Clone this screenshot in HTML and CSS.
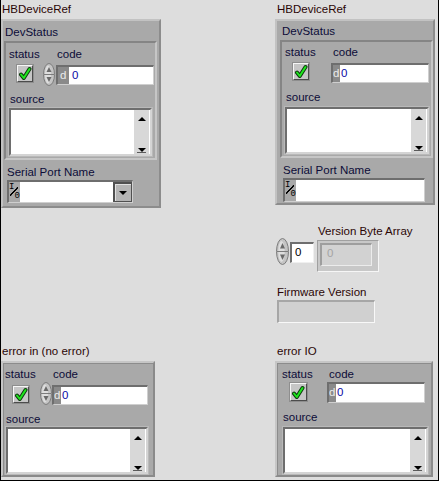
FILE: index.html
```html
<!DOCTYPE html>
<html>
<head>
<meta charset="utf-8">
<title>HBDevice Panel</title>
<link rel="stylesheet" href="styles.css">
</head>
<body>
<div class="panel">

  <!-- top-left HBDeviceRef -->
  <div class="obj hb-l">
    <div class="lbl top">HBDeviceRef</div>
    <div class="outer">
      <div class="lbl in dev">DevStatus</div>
      <div class="inner">
        <div class="row">
          <div class="scol">
            <div class="lbl in">status</div>
            <div class="chk"><svg width="14" height="15" viewBox="0 0 14 15"><path d="M3 8.5 L5.8 12 L11.5 3" fill="none" stroke="#0d3a0d" stroke-width="4" stroke-linecap="round" stroke-linejoin="round"/><path d="M3 8.5 L5.8 12 L11.5 3" fill="none" stroke="#1ee61e" stroke-width="2" stroke-linecap="round" stroke-linejoin="round"/></svg></div>
          </div>
          <div class="spin"><svg width="12" height="23" viewBox="0 0 12 23"><ellipse cx="6" cy="11.5" rx="5.5" ry="11" fill="#c4c4c4" stroke="#7c7c7c"/><ellipse cx="5" cy="11.5" rx="3" ry="9" fill="#dedede"/><line x1="1" y1="11.5" x2="11" y2="11.5" stroke="#7c7c7c"/><path d="M6 4 L8.5 9 L3.5 9Z" fill="#6a6a6a"/><path d="M6 19 L8.5 14 L3.5 14Z" fill="#6a6a6a"/></svg></div>
          <div class="ccol">
            <div class="lbl in cl">code</div>
            <div class="num"><span class="radix">d</span><span class="val">0</span></div>
          </div>
        </div>
        <div class="lbl in src">source</div>
        <div class="ta"><div class="sb"><span class="up"></span><span class="dn"></span></div></div>
      </div>
      <div class="lbl in spn">Serial Port Name</div>
      <div class="visa"><span class="io"><span class="io-i">I</span><span class="io-o">0</span></span><span class="field"></span><span class="ddb"><span class="tri"></span></span></div>
    </div>
  </div>

  <!-- top-right HBDeviceRef -->
  <div class="obj hb-r">
    <div class="lbl top">HBDeviceRef</div>
    <div class="outer">
      <div class="lbl in dev">DevStatus</div>
      <div class="inner">
        <div class="row">
          <div class="scol">
            <div class="lbl in">status</div>
            <div class="chk"><svg width="14" height="15" viewBox="0 0 14 15"><path d="M3 8.5 L5.8 12 L11.5 3" fill="none" stroke="#0d3a0d" stroke-width="4" stroke-linecap="round" stroke-linejoin="round"/><path d="M3 8.5 L5.8 12 L11.5 3" fill="none" stroke="#1ee61e" stroke-width="2" stroke-linecap="round" stroke-linejoin="round"/></svg></div>
          </div>
          <div class="ccol">
            <div class="lbl in cl">code</div>
            <div class="num"><span class="radix n">d</span><span class="val">0</span></div>
          </div>
        </div>
        <div class="lbl in src">source</div>
        <div class="ta"><div class="sb"><span class="up"></span><span class="dn"></span></div></div>
      </div>
      <div class="lbl in spn">Serial Port Name</div>
      <div class="visa"><span class="io"><span class="io-i">I</span><span class="io-o">0</span></span><span class="field"></span></div>
    </div>
  </div>

  <!-- version index + numeric -->
  <div class="obj vidx">
    <div class="spin big"><svg width="13" height="27" viewBox="0 0 13 27"><ellipse cx="6.5" cy="13.5" rx="6" ry="13" fill="#c4c4c4" stroke="#7c7c7c"/><ellipse cx="5.5" cy="13.5" rx="3.2" ry="10.5" fill="#dedede"/><line x1="1" y1="13.5" x2="12" y2="13.5" stroke="#7c7c7c"/><path d="M6.5 5 L9 10.5 L4 10.5Z" fill="#6a6a6a"/><path d="M6.5 22 L9 16.5 L4 16.5Z" fill="#6a6a6a"/></svg></div>
    <div class="num small"><span class="val blk">0</span></div>
  </div>

  <div class="obj varr">
    <div class="lbl top">Version Byte Array</div>
    <div class="arr"><div class="arr-el">0</div></div>
  </div>

  <div class="obj fw">
    <div class="lbl top">Firmware Version</div>
    <div class="str"></div>
  </div>

  <!-- error in -->
  <div class="obj ein">
    <div class="lbl top">error in (no error)</div>
    <div class="inner solo">
      <div class="row">
        <div class="scol">
          <div class="lbl in">status</div>
          <div class="chk"><svg width="14" height="15" viewBox="0 0 14 15"><path d="M3 8.5 L5.8 12 L11.5 3" fill="none" stroke="#0d3a0d" stroke-width="4" stroke-linecap="round" stroke-linejoin="round"/><path d="M3 8.5 L5.8 12 L11.5 3" fill="none" stroke="#1ee61e" stroke-width="2" stroke-linecap="round" stroke-linejoin="round"/></svg></div>
        </div>
        <div class="spin"><svg width="12" height="23" viewBox="0 0 12 23"><ellipse cx="6" cy="11.5" rx="5.5" ry="11" fill="#c4c4c4" stroke="#7c7c7c"/><ellipse cx="5" cy="11.5" rx="3" ry="9" fill="#dedede"/><line x1="1" y1="11.5" x2="11" y2="11.5" stroke="#7c7c7c"/><path d="M6 4 L8.5 9 L3.5 9Z" fill="#6a6a6a"/><path d="M6 19 L8.5 14 L3.5 14Z" fill="#6a6a6a"/></svg></div>
        <div class="ccol">
          <div class="lbl in cl">code</div>
          <div class="num"><span class="radix n">d</span><span class="val">0</span></div>
        </div>
      </div>
      <div class="lbl in src">source</div>
      <div class="ta"><div class="sb"><span class="up"></span><span class="dn"></span></div></div>
    </div>
  </div>

  <!-- error IO -->
  <div class="obj eio">
    <div class="lbl top">error IO</div>
    <div class="inner solo">
      <div class="row">
        <div class="scol">
          <div class="lbl in">status</div>
          <div class="chk"><svg width="14" height="15" viewBox="0 0 14 15"><path d="M3 8.5 L5.8 12 L11.5 3" fill="none" stroke="#0d3a0d" stroke-width="4" stroke-linecap="round" stroke-linejoin="round"/><path d="M3 8.5 L5.8 12 L11.5 3" fill="none" stroke="#1ee61e" stroke-width="2" stroke-linecap="round" stroke-linejoin="round"/></svg></div>
        </div>
        <div class="ccol">
          <div class="lbl in cl">code</div>
          <div class="num"><span class="radix n">d</span><span class="val">0</span></div>
        </div>
      </div>
      <div class="lbl in src">source</div>
      <div class="ta"><div class="sb"><span class="up"></span><span class="dn"></span></div></div>
    </div>
  </div>

</div>
</body>
</html>
```
FILE: styles.css
```css
* { box-sizing: border-box; }
html, body { margin: 0; padding: 0; }
body {
  background: #dddddd;
  font-family: "Liberation Sans", Arial, sans-serif;
}
.panel {
  position: relative;
  width: 439px;
  height: 481px;
  background: #dddddd;
  overflow: hidden;
  box-shadow: inset 1px 0 #000, inset -1px 0 #000, inset 0 -1px #000;
}

/* free-canvas front-panel objects */
.obj { position: absolute; display: flex; flex-direction: column; align-items: flex-start; }
.hb-l { left: 1px; top: 2px; }
.hb-r { left: 275px; top: 2px; }
.vidx { left: 276px; top: 238px; flex-direction: row; }
.varr { left: 317px; top: 224px; }
.fw { left: 277px; top: 285px; }
.ein { left: 1px; top: 344px; }
.eio { left: 275px; top: 344px; }

/* labels */
.lbl {
  font-size: 11.5px;
  line-height: 15px;
  height: 15px;
  white-space: nowrap;
}
.top { color: #2b0606; margin-left: 1px; }
.hb-r .top, .eio .top { margin-left: 2px; }
.varr .top { margin-left: 1px; }
.fw .top { margin-left: 0; }
.in { color: #0c0c38; }

/* clusters */
.outer {
  margin-top: 2px;
  width: 160px;
  background: #a9a9a9;
  border: 2px solid;
  border-color: #c2c2c2 #8c8c8c #8c8c8c #c2c2c2;
  display: flex;
  flex-direction: column;
  align-items: flex-start;
}
.inner {
  width: 153px;
  background: #a9a9a9;
  border: 2px solid;
  border-color: #858585 #c6c6c6 #c6c6c6 #858585;
  display: flex;
  flex-direction: column;
  align-items: flex-start;
}
.inner.solo {
  margin-top: 2px;
  border-color: #c6c6c6 #8a8a8a #8a8a8a #c6c6c6;
  box-shadow: inset 1px 1px #8c8c8c;
}

.row { display: flex; align-items: flex-start; }
.scol { width: 32px; display: flex; flex-direction: column; align-items: center; }
.scol .lbl { align-self: flex-start; }
.ccol { display: flex; flex-direction: column; align-items: flex-start; }

/* ---- top-left ---- */
.hb-l .dev { margin: 4px 0 1px 2px; }
.hb-l .inner { margin-left: 1px; padding: 4px 2px 2px 3px; }
.hb-l .chk { margin-top: 3px; }
.hb-l .spin { margin: 16px 0 0 2px; }
.hb-l .ccol { margin-left: 1px; }
.hb-l .cl { margin-left: 1px; }
.hb-l .num { margin-top: 3px; width: 98px; }
.hb-l .src { margin: 6px 0 0 1px; }
.hb-l .ta { margin-top: 1px; width: 143px; height: 48px; }
.hb-l .spn { margin: 5px 0 0 4px; }
.hb-l .visa { margin: 0 0 3px 4px; width: 126px; }

/* ---- top-right ---- */
.hb-r .dev { margin: 3px 0 1px 5px; }
.hb-r .inner { margin-left: 3px; padding: 3px 0 2px 0; }
.hb-r .scol { margin-left: 3px; }
.hb-r .chk { margin-top: 3px; }
.hb-r .ccol { margin-left: 14px; }
.hb-r .cl { margin-left: 2px; }
.hb-r .num { margin-top: 3px; width: 98px; }
.hb-r .src { margin: 7px 0 0 4px; }
.hb-r .ta { margin: 2px 0 0 3px; width: 144px; height: 47px; }
.hb-r .spn { margin: 5px 0 0 6px; }
.hb-r .visa { margin: 0 0 1px 6px; width: 142px; height: 24px; }

/* ---- error in ---- */
.ein .inner { width: 154px; padding: 4px 0 1px 0; }
.ein .scol { margin-left: 2px; }
.ein .chk { margin-top: 4px; }
.ein .spin { margin: 15px 0 0 3px; }
.ein .cl { margin-left: 1px; }
.ein .num { margin-top: 3px; width: 96px; }
.ein .src { margin: 7px 0 0 3px; }
.ein .ta { margin-left: 3px; width: 142px; height: 47px; }

/* ---- error IO ---- */
.eio .inner { width: 158px; padding: 4px 0 1px 0; }
.eio .scol { margin-left: 5px; }
.eio .chk { margin-top: 1px; width: 17px; height: 18px; }
.eio .ccol { margin-left: 13px; }
.eio .cl { margin-left: 2px; }
.eio .num { width: 98px; height: 21px; }
.eio .src { margin: 7px 0 0 6px; }
.eio .ta { margin: 2px 0 0 6px; width: 145px; height: 47px; }

/* checkbox */
.chk {
  width: 16px;
  height: 17px;
  background: #c6c6c6;
  border: 1px solid;
  border-color: #f6f6f6 #4c4c4c #4c4c4c #f6f6f6;
  box-shadow: 0 0 0 1px #8e8e8e;
  display: flex;
  align-items: center;
  justify-content: center;
}
.chk svg { display: block; }

.spin { width: 12px; height: 23px; }
.spin svg { display: block; }
.spin.big { width: 13px; height: 27px; }

/* numeric */
.num {
  display: flex;
  height: 20px;
  background: #fff;
  border-style: solid;
  border-width: 2px 1px 1px 2px;
  border-color: #6e6e6e #cfcfcf #cfcfcf #6e6e6e;
  font-size: 11.5px;
  line-height: 17px;
}
.radix {
  width: 11px;
  background: #8a8a8a;
  color: #ececec;
  padding-left: 2px;
}
.radix.n { width: 7px; padding-left: 0; overflow: hidden; }
.val { color: #0a0aa6; padding-left: 3px; }
.radix.n + .val { padding-left: 1px; }
.val.blk { color: #000; }
.num.small {
  width: 24px;
  height: 21px;
  margin: 4px 0 0 1px;
  border-color: #6e6e6e #f0f0f0 #f0f0f0 #6e6e6e;
}

/* string / text box */
.ta {
  display: flex;
  justify-content: flex-end;
  background: #fff;
  border: 2px solid;
  border-color: #6e6e6e #d4d4d4 #d4d4d4 #6e6e6e;
  box-shadow: 0 0 0 1px #b9b9b9;
  padding: 0 1px 0 0;
}
.sb {
  width: 15px;
  background: #d8d8d8;
  display: flex;
  flex-direction: column;
  align-items: center;
  justify-content: space-between;
  padding: 7px 0 1px 0;
}
.up {
  width: 0; height: 0;
  border-left: 4px solid transparent;
  border-right: 4px solid transparent;
  border-bottom: 4px solid #000;
}
.dn {
  width: 9px; height: 5px;
  border-bottom: 1px solid #5a5a5a;
  display: flex;
  justify-content: center;
}
.dn::before {
  content: "";
  width: 0; height: 0;
  border-left: 4px solid transparent;
  border-right: 4px solid transparent;
  border-top: 4px solid #000;
}

/* VISA resource control */
.visa {
  display: flex;
  height: 23px;
  background: #a9a9a9;
  border-style: solid;
  border-width: 2px 1px 1px 2px;
  border-color: #6e6e6e #cfcfcf #cfcfcf #6e6e6e;
}
.io {
  width: 11px;
  display: flex;
  flex-direction: column;
  font-family: "Liberation Mono", "DejaVu Sans Mono", monospace;
  font-size: 9px;
  line-height: 9px;
  color: #000;
  padding-top: 1px;
  background: linear-gradient(to bottom right, transparent 43%, #000 45%, #000 55%, transparent 57%) 1px 5px / 8px 9px no-repeat;
}
.io-i { align-self: flex-start; margin-left: 0; }
.io-o { align-self: flex-end; margin-right: 0; }
.field { flex: 1; background: #fff; }
.ddb {
  width: 19px;
  background: #b4b4b4;
  border: 2px solid #505050;
  border-right-width: 1px;
  border-bottom-width: 1px;
  box-shadow: inset 1px 1px #e0e0e0;
  display: flex;
  align-items: center;
  justify-content: center;
}
.tri {
  width: 0; height: 0;
  border-left: 4px solid transparent;
  border-right: 4px solid transparent;
  border-top: 4px solid #000;
}

/* array & indicator */
.arr {
  margin-top: 1px;
  width: 62px;
  height: 32px;
  background: #c8c8c8;
  border: 1px solid;
  border-color: #a0a0a0 #f6f6f6 #f6f6f6 #a0a0a0;
  padding: 2px 6px 5px 2px;
  display: flex;
}
.arr-el {
  flex: 1;
  background: #d2d2d2;
  border-style: solid;
  border-width: 2px 1px 1px 2px;
  border-color: #9e9e9e #ececec #ececec #9e9e9e;
  color: #a4a4a4;
  font-size: 11.5px;
  line-height: 17px;
  padding-left: 5px;
}
.str {
  width: 98px;
  height: 23px;
  background: #d0d0d0;
  border-style: solid;
  border-width: 2px 1px 1px 2px;
  border-color: #a6a6a6 #f8f8f8 #f8f8f8 #a6a6a6;
}
```
